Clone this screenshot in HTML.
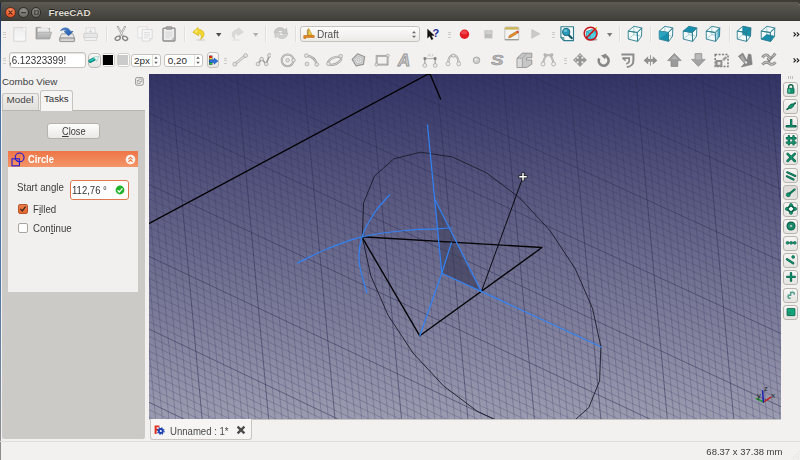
<!DOCTYPE html>
<html lang="en"><head><meta charset="utf-8"><title>FreeCAD</title>
<style>
html,body{margin:0;padding:0}
body{width:800px;height:460px;overflow:hidden;position:relative;background:#f2f1f0;font-family:"Liberation Sans","DejaVu Sans",sans-serif;font-size:10px;color:#3c3c3c}
.abs,.view,svg.ic{position:absolute}
.view{display:block}
#topband{left:0;top:0;width:800px;height:4px;background:#3e3c37}
#title{left:0;top:2.4px;width:800px;height:18.4px;background:linear-gradient(#5d5b53,#55534c 25%,#4a4943 60%,#41403b 92%,#36352f);border-radius:4px 4px 0 0;box-sizing:border-box}
#title .t{position:absolute;left:48.6px;top:4.2px;font-weight:bold;font-size:9.8px;color:#dfdbd2;letter-spacing:0;text-shadow:0 -1px 0 #222}
.wb{position:absolute;top:4.5px;width:10.8px;height:10.8px;border-radius:50%;box-sizing:border-box}
#leftedge{left:0;top:3px;width:1px;height:457px;background:linear-gradient(#1a2742,#2a4470 5%,#4a72a2 14%,#4f76a6 60%,#7a8797 85%,#8c8c8c 95%)}
.sep{position:absolute;width:1px;background:#e1dfdb;border-right:1px solid #f8f8f7}
.handle{position:absolute;width:3px;height:6px;background:repeating-linear-gradient(#cfccc7 0,#cfccc7 1px,transparent 1px,transparent 2.4px)}
/* left panel */
#combo-title{left:2px;top:76.3px;font-size:9.8px;color:#3c3c3c}
#pane{left:2px;top:110px;width:143px;height:329px;background:#cbcac7;border-top:1px solid #b9b6b1;box-sizing:border-box;border-radius:0 0 2px 2px}
.tab{position:absolute;box-sizing:border-box;border:1px solid #c6c3be;border-bottom:none;border-radius:3px 3px 0 0;font-size:10.3px;text-align:center}
#closebtn{left:47px;top:123px;width:53px;height:16px;border:1px solid #b6b3ad;border-radius:3px;box-sizing:border-box;background:linear-gradient(#fdfdfc,#ebe9e6);text-align:center;font-size:10px;line-height:16px;color:#3c3c3c}
#hdr{left:8px;top:151px;width:130px;height:16px;background:linear-gradient(#ee7546,#f39669);}
#hdr .t{position:absolute;left:20px;top:3px;font-weight:bold;color:#fff;font-size:10px;transform:scaleX(0.93);transform-origin:0 0}
#box{left:8px;top:167px;width:130px;height:125px;background:#f1f0ee}
#angle{left:70px;top:180px;width:59px;height:20px;border:1px solid #e0764a;border-radius:3px;box-sizing:border-box;background:#fff;font-size:10.2px;line-height:19px;padding-left:0.8px;color:#333}
.cb{position:absolute;width:10px;height:10px;box-sizing:border-box;border-radius:2px}
.lbl{position:absolute;font-size:10.3px;color:#3c3c3c;white-space:nowrap}
u{text-decoration:underline;text-underline-offset:1px}
/* right toolbar */
.rb{position:absolute;left:783px;width:15px;height:15px;box-sizing:border-box;border:1px solid #b9b6b0;border-radius:3px;background:linear-gradient(#f7f6f5,#e6e4e1)}
.rb svg{position:absolute;left:0;top:0}
/* bottom */
#doctab{left:149.5px;top:419px;width:102px;height:21.2px;box-sizing:border-box;border:1px solid #c9c6c1;border-top:none;border-radius:0 0 3px 3px;background:#f6f5f4}
#status{left:0;top:441px;width:800px;height:19px;border-top:1px solid #dfddd9;box-sizing:border-box}
/* toolbar widgets */
.field{position:absolute;box-sizing:border-box;border:1px solid #c6c3be;border-radius:3px;background:#fff}
.tbtn{position:absolute;box-sizing:border-box;border:1px solid #c6c3be;border-radius:3px;background:linear-gradient(#f9f8f7,#e8e6e3)}

</style></head>
<body>
<div id="topband" class="abs"></div>
<div id="title" class="abs">
  <div class="wb" style="left:5.3px;background:radial-gradient(circle at 50% 30%,#f7966b,#ea5a2e 65%,#d9481f);border:1px solid #5e2c18"><svg width="9" height="9" viewBox="0 0 9 9" style="position:absolute;left:0;top:0"><path d="M2.9 2.9l3.2 3.2M6.1 2.9l-3.2 3.2" stroke="#5a2410" stroke-width="1.1" stroke-linecap="round"/></svg></div>
  <div class="wb" style="left:17.9px;background:radial-gradient(circle at 50% 30%,#93918a,#74726b 65%,#66645e);border:1px solid #2e2d2a"><svg width="9" height="9" viewBox="0 0 9 9" style="position:absolute;left:0;top:0"><path d="M2.6 4.6h3.8" stroke="#3a3935" stroke-width="1.2" stroke-linecap="round"/></svg></div>
  <div class="wb" style="left:30.6px;background:radial-gradient(circle at 50% 30%,#93918a,#74726b 65%,#66645e);border:1px solid #2e2d2a"><svg width="9" height="9" viewBox="0 0 9 9" style="position:absolute;left:0;top:0"><rect x="2.7" y="2.8" width="3.6" height="3.4" fill="none" stroke="#3a3935" stroke-width="1"/></svg></div>
  <div class="t">FreeCAD</div>
</div>
<div id="leftedge" class="abs"></div>
<div class="handle" style="left:3.4px;top:32.4px"></div>
<div class="handle" style="left:448px;top:32.4px"></div>
<div class="handle" style="left:551.5px;top:32.4px"></div>
<div class="handle" style="left:3.4px;top:58.2px"></div>
<div class="handle" style="left:224px;top:58.2px"></div>
<div class="handle" style="left:563.5px;top:58.2px"></div>
<div class="sep" style="left:106px;top:26px;height:16px"></div>
<div class="sep" style="left:184px;top:26px;height:16px"></div>
<div class="sep" style="left:264.5px;top:26px;height:16px"></div>
<div class="sep" style="left:295px;top:26px;height:16px"></div>
<div class="sep" style="left:619px;top:26px;height:16px"></div>
<div class="sep" style="left:650px;top:26px;height:16px"></div>
<div class="sep" style="left:728.5px;top:26px;height:16px"></div>
<div class="tbtn" style="left:300px;top:26px;width:120px;height:15.5px;background:linear-gradient(#fcfcfb,#eceae7)"><span class="lbl" style="left:16px;top:1px;font-size:10.6px;color:#505050;transform:scaleX(0.95);transform-origin:0 0">Draft</span><svg width="6" height="9" viewBox="0 0 6 9" style="position:absolute;left:110.4px;top:3px"><path d="M1 3.2l2-2.2 2 2.2zM1 5.8l2 2.2 2-2.2z" fill="#6a6a6a"/></svg></div>
<div class="field" style="left:8.5px;top:52.3px;width:77.2px;height:15.8px;overflow:hidden;box-shadow:inset 0 1px 1px #e4e2de"><span class="lbl" style="left:-0.9px;top:1.5px;font-size:10.2px;color:#333;transform:scaleX(0.96);transform-origin:0 0">,6.12323399!</span></div>
<div class="tbtn" style="left:87.5px;top:52.5px;width:13.5px;height:15px;border-radius:4px;border-color:#c0bdb8"></div>
<div class="tbtn" style="left:102px;top:52.8px;width:12.8px;height:14.7px;background:#fdfdfd;border-color:#d2cfca"><div class="abs" style="left:0.2px;top:1.4px;width:10.3px;height:10px;background:#000"></div></div>
<div class="tbtn" style="left:116.5px;top:52.8px;width:13px;height:14.7px;background:#fdfdfd;border-color:#d2cfca"><div class="abs" style="left:0.5px;top:1.4px;width:10px;height:10.2px;background:#cbcbcb"></div></div>
<div class="field" style="left:131.2px;top:53.7px;width:29.6px;height:13px"><span class="lbl" style="left:1.8px;top:0.5px;font-size:9.9px;color:#2c2c2c">2px</span><div class="abs" style="left:19.6px;top:0;width:1px;height:11px;background:#e2dfdb"></div><svg width="6" height="10" viewBox="0 0 6 10" style="position:absolute;right:0.6px;top:0.6px"><path d="M1.2 3.8l1.8-2.2 1.8 2.2zM1.2 6.8l1.8 2.2 1.8-2.2z" fill="#666"/></svg></div>
<div class="field" style="left:164px;top:53.7px;width:38.8px;height:13px"><span class="lbl" style="left:2.8px;top:0.5px;font-size:9.9px;color:#2c2c2c">0,20</span><div class="abs" style="left:29.2px;top:0;width:1px;height:11px;background:#e2dfdb"></div><svg width="6" height="10" viewBox="0 0 6 10" style="position:absolute;right:0.6px;top:0.6px"><path d="M1.2 3.8l1.8-2.2 1.8 2.2zM1.2 6.8l1.8 2.2 1.8-2.2z" fill="#666"/></svg></div>
<div class="tbtn" style="left:206.5px;top:52.4px;width:12.6px;height:15.4px"></div>
<svg class="ic" width="14" height="15.4" viewBox="0 0 14 15.4" style="left:13px;top:26.6px"><defs><linearGradient id="nd" x1="0" y1="0" x2="0" y2="1"><stop offset="0" stop-color="#ededed"/><stop offset="1" stop-color="#fafafa"/></linearGradient></defs><path d="M0.8 0.6h12v13.6h-12z" fill="url(#nd)" stroke="#d2d2d2" stroke-width="0.9"/><path d="M9.6 0.8h3v3h-3z" fill="#fcfcfc" stroke="#dedede" stroke-width="0.6"/><path d="M0.8 14.8h12" stroke="#dcdcdc" stroke-width="0.9"/></svg>
<svg class="ic" width="17.4" height="14" viewBox="0 0 17.4 14" style="left:35px;top:26px"><defs><linearGradient id="fo" x1="0" y1="0" x2="0" y2="1"><stop offset="0" stop-color="#cacaca"/><stop offset="1" stop-color="#a9a9a9"/></linearGradient></defs><path d="M1 1.4h4.6l0.8 1h8.2v10.2h-13.6z" fill="#a2a2a2" stroke="#949494" stroke-width="0.6"/><path d="M2.6 2.2h11v6h-11z" fill="#f4f4f4"/><path d="M3.4 3.4h11v6h-11z" fill="#e9e9e9"/><path d="M2.8 6.2h13.8l-1.9 6.8h-13.7z" fill="url(#fo)" stroke="#9b9b9b" stroke-width="0.6" stroke-linejoin="round"/></svg>
<svg class="ic" width="17" height="16" viewBox="0 0 17 16" style="left:59px;top:26.6px"><defs><linearGradient id="sa" x1="0" y1="0" x2="1" y2="1"><stop offset="0" stop-color="#4a8ad6"/><stop offset="1" stop-color="#1f57a6"/></linearGradient></defs><path d="M2.6 6.8h11.2l1.8 4.4h-15z" fill="#e6e6e6" stroke="#909090" stroke-width="0.8" stroke-linejoin="round"/><rect x="0.6" y="11" width="15" height="3.6" rx="0.8" fill="#c2c2c2" stroke="#838383" stroke-width="0.8"/><path d="M2 12.2h12M2 13.5h12" stroke="#e6e6e6" stroke-width="0.6"/><path d="M1.6 3.6C3.4 0.2 9.6 -0.4 11.4 4.4h2.6l-4.4 4.4-4.4-4.2h2.5C6.6 2.6 3.8 2.4 1.6 3.6z" fill="url(#sa)" stroke="#1c4f98" stroke-width="0.6" stroke-linejoin="round"/></svg>
<svg class="ic" width="16" height="15" viewBox="0 0 16 15" style="left:83px;top:26.6px"><rect x="3" y="0.8" width="9" height="6" fill="#f4f4f4" stroke="#d4d4d4" stroke-width="0.8"/><path d="M7.5 2v3.2M6 3.8l1.5 1.6 1.5-1.6" fill="none" stroke="#d2d2d2" stroke-width="0.9"/><rect x="0.7" y="6.2" width="13.8" height="5" rx="1" fill="#e6e6e6" stroke="#cccccc" stroke-width="0.8"/><rect x="1.8" y="10.6" width="11.6" height="2.8" fill="#f0f0f0" stroke="#d2d2d2" stroke-width="0.8"/></svg>
<svg class="ic" width="15" height="16" viewBox="0 0 15 16" style="left:114px;top:26px"><path d="M3.8 0.8l5.2 9.4M11 0.8l-5.2 9.4" stroke="#9d9d9d" stroke-width="1.9" stroke-linecap="round"/><path d="M4 1.2l4.8 8.6M10.8 1.2l-4.8 8.6" stroke="#ededed" stroke-width="0.8" stroke-linecap="round"/><ellipse cx="3.7" cy="12.3" rx="2.6" ry="1.9" fill="none" stroke="#858585" stroke-width="1.4" transform="rotate(-25 3.7 12.3)"/><ellipse cx="11.1" cy="12.3" rx="2.6" ry="1.9" fill="none" stroke="#858585" stroke-width="1.4" transform="rotate(25 11.1 12.3)"/></svg>
<svg class="ic" width="16" height="16" viewBox="0 0 16 16" style="left:137px;top:26px"><path d="M0.7 0.8h9.6v11h-9.6z" fill="#f6f6f6" stroke="#dddddd" stroke-width="0.8"/><path d="M5.2 3.6h10v8.8l-2.6 2.6h-7.4z" fill="#f7f7f7" stroke="#d3d3d3" stroke-width="0.8"/><path d="M7 6.5h6M7 8.3h6M7 10.1h6M7 11.9h4" stroke="#d9d9d9" stroke-width="0.8"/><path d="M15.2 12.4h-2.6v2.6" fill="none" stroke="#d3d3d3" stroke-width="0.8"/></svg>
<svg class="ic" width="14" height="16" viewBox="0 0 14 16" style="left:162px;top:26px"><rect x="1" y="2.2" width="12" height="12.8" rx="0.8" fill="#ededed" stroke="#8a8a8a" stroke-width="1.3"/><rect x="4" y="0.7" width="6" height="2.6" rx="0.8" fill="#a8a8a8" stroke="#858585" stroke-width="0.7"/><path d="M3.6 6.2h6.8M3.6 8h6.8M3.6 9.8h6.8M3.6 11.6h4" stroke="#d2d2d2" stroke-width="0.8"/><path d="M12 11l-2.8 2.8h2.8z" fill="#b4b4b4"/></svg>
<svg class="ic" width="15" height="14" viewBox="0 0 15 14" style="left:192px;top:27px"><ellipse cx="8.6" cy="13" rx="4.6" ry="0.9" fill="#d9d9d2"/><path d="M6 0.6l-5.2 4.6 6 3.6-0.5-2.4c2.4-0.2 4 1.8 2.4 5.8 5-2.8 4.4-9.6-2.4-9.6z" fill="#f2d72e" stroke="#d6b818" stroke-width="0.8" stroke-linejoin="round"/><path d="M5.4 2.2l-2.8 2.6 2 1.2z" fill="#faed8e"/></svg>
<svg class="ic" width="6" height="4" viewBox="0 0 6 4" style="left:216px;top:33px"><path d="M0 0h5.4l-2.7 3.8z" fill="#4c4c4c"/></svg>
<svg class="ic" width="14" height="14" viewBox="0 0 14 14" style="left:230px;top:27px"><ellipse cx="6" cy="13" rx="4.5" ry="0.9" fill="#e6e6e6"/><path d="M8.4 0.8l4.8 4.2-5.6 3.4 0.4-2.2c-2.8-0.4-4.6 1.6-3 5.8-4.4-2.8-3.6-9.2 3-9.4z" fill="#dadada" stroke="#cfcfcf" stroke-width="0.8" stroke-linejoin="round"/></svg>
<svg class="ic" width="6" height="4" viewBox="0 0 6 4" style="left:252.5px;top:33px"><path d="M0 0h5.4l-2.7 3.8z" fill="#b0b0b0"/></svg>
<svg class="ic" width="16" height="15" viewBox="0 0 16 15" style="left:273px;top:26px"><g transform="scale(1.06 1.0)"><path d="M1.2 6.6c0.2-5 7-6.8 10-2.8l1.6-1.6 0.6 5.6-5.6-0.6 1.7-1.7c-1.8-2-5.2-1.2-5.6 1.7z" fill="#c9c9c9" stroke="#b8b8b8" stroke-width="0.7" stroke-linejoin="round"/><path d="M13.8 7.4c-0.2 5-7 6.8-10 2.8l-1.6 1.6-0.6-5.6 5.6 0.6-1.7 1.7c1.8 2 5.2 1.2 5.6-1.7z" fill="#d2d2d2" stroke="#bcbcbc" stroke-width="0.7" stroke-linejoin="round"/></g></svg>
<svg class="ic" width="12" height="11" viewBox="0 0 12 11" style="left:303px;top:28px"><path d="M5.6 0.4l3.6 6.8h-3.6z" fill="#f5d34a" stroke="#b98a12" stroke-width="0.7" stroke-linejoin="round"/><path d="M0.8 7.6h10.4v1.8h-8.6v1h-1.8z" fill="#e98a1c" stroke="#b45f0b" stroke-width="0.6" stroke-linejoin="round"/><path d="M4.4 1.4v6" stroke="#9b6b10" stroke-width="0.8"/></svg>
<svg class="ic" width="13" height="13" viewBox="0 0 13 13" style="left:427px;top:28px"><path d="M0.6 1.2v8.8l2.2-2 1.7 3.7 1.5-0.7-1.7-3.6h2.9z" fill="#111" stroke="#000" stroke-width="0.4"/><text x="5.4" y="9.4" font-family="Liberation Sans,sans-serif" font-weight="bold" font-size="11" fill="#1c2f9e">?</text></svg>
<svg class="ic" width="11" height="11" viewBox="0 0 11 11" style="left:459px;top:28.5px"><circle cx="5.5" cy="5.3" r="4.7" fill="#e31b23"/><ellipse cx="5.2" cy="3.4" rx="3" ry="1.9" fill="#f0565c" opacity="0.75"/></svg>
<svg class="ic" width="9" height="9" viewBox="0 0 9 9" style="left:484px;top:29.5px"><rect x="0.7" y="0.5" width="7.4" height="7.6" fill="#bcbcbc" stroke="#c9c9c9" stroke-width="0.7"/><rect x="1.4" y="1.2" width="6" height="2.8" fill="#d0d0d0"/></svg>
<svg class="ic" width="16" height="15" viewBox="0 0 16 15" style="left:504px;top:26px"><rect x="0.8" y="1" width="14" height="13" rx="1" fill="#f3f3f1" stroke="#bdbdb8" stroke-width="0.9"/><rect x="1.2" y="1.2" width="13.2" height="2.4" fill="#c9b458"/><path d="M0.8 13.6h14" stroke="#9c9c97" stroke-width="1.2"/><path d="M5.4 9.6l7-4.2 1.2 1.8-7 4.2-2 0.4z" fill="#e8952e" stroke="#a8601a" stroke-width="0.6" stroke-linejoin="round"/><path d="M12.4 5.4l1.4-0.8 1.2 1.8-1.4 0.8z" fill="#d83a3a"/></svg>
<svg class="ic" width="10" height="10" viewBox="0 0 10 10" style="left:531px;top:29px"><path d="M0.8 0.6l8 4.2-8 4.4z" fill="#cbcbcb" stroke="#bdbdbd" stroke-width="0.7" stroke-linejoin="round"/></svg>
<svg class="ic" width="15" height="16" viewBox="0 0 15 16" style="left:560px;top:26px"><path d="M0.9 0.8h12.6v13.8h-9.6l-3-3z" fill="#f4f8f9" stroke="#2c7d8e" stroke-width="1.1" stroke-linejoin="round"/><path d="M0.9 11.6h3v3" fill="none" stroke="#2c7d8e" stroke-width="0.9"/><path d="M8.2 8.4l3.6 3.8" stroke="#14586a" stroke-width="2.2" stroke-linecap="round"/><circle cx="6.2" cy="6" r="3.7" fill="#2a9ab8" stroke="#14647a" stroke-width="0.9"/><ellipse cx="5.4" cy="4.8" rx="1.8" ry="1.2" fill="#7fd0e2" opacity="0.8"/></svg>
<svg class="ic" width="16" height="16" viewBox="0 0 16 16" style="left:583px;top:26px"><ellipse cx="9" cy="13.6" rx="5.6" ry="1.2" fill="#555" opacity="0.45"/><path d="M3.4 5.4l6-1.8 3.6 2v6l-6 2-3.6-2z" fill="#55cfe0" stroke="#1d8fa6" stroke-width="0.7" stroke-linejoin="round"/><path d="M3.4 5.4l3.6 2.2 6-2M7 7.6v6" fill="none" stroke="#1d8fa6" stroke-width="0.6"/><path d="M9.4 6.4l4-4.8" stroke="#e8b62c" stroke-width="1.3" stroke-linecap="round"/><circle cx="7.6" cy="7.6" r="6.4" fill="none" stroke="#c4161c" stroke-width="1.5"/><path d="M3 12.2l9.2-9.2" stroke="#c4161c" stroke-width="1.6"/></svg>
<svg class="ic" width="6" height="4" viewBox="0 0 6 4" style="left:607px;top:33px"><path d="M0 0h5.4l-2.7 3.8z" fill="#7c7c7c"/></svg>
<svg class="ic" width="16" height="18" viewBox="0 0 16 18" style="left:627px;top:25px"><polygon points="1.2,6.1 6.8,1.3 14.8,2.9 14.5,11.3 10.6,16.4 1.3,14.1" fill="#f3fafb"/><path d="M6.8 9.6L1.3 14.1M6.8 9.6L14.5 11.3M6.8 9.6L6.8 1.3" stroke="#7fb4bf" stroke-width="0.6" fill="none"/><polygon points="1.2,6.1 10.3,7.5 10.6,16.4 1.3,14.1" fill="none" stroke="#2c7e90" stroke-width="0.9" stroke-linejoin="round"/><polygon points="1.2,6.1 6.8,1.3 14.8,2.9 10.3,7.5" fill="none" stroke="#2c7e90" stroke-width="0.9" stroke-linejoin="round"/><polygon points="10.3,7.5 14.8,2.9 14.5,11.3 10.6,16.4" fill="none" stroke="#2c7e90" stroke-width="0.9" stroke-linejoin="round"/></svg>
<svg class="ic" width="16" height="18" viewBox="0 0 16 18" style="left:658.1px;top:25px"><polygon points="1.2,6.1 6.8,1.3 14.8,2.9 14.5,11.3 10.6,16.4 1.3,14.1" fill="#f3fafb"/><path d="M6.8 9.6L1.3 14.1M6.8 9.6L14.5 11.3M6.8 9.6L6.8 1.3" stroke="#7fb4bf" stroke-width="0.6" fill="none"/><polygon points="1.2,6.1 10.3,7.5 10.6,16.4 1.3,14.1" fill="#168fae" stroke="#2c7e90" stroke-width="0.9" stroke-linejoin="round"/><polygon points="1.2,6.1 6.8,1.3 14.8,2.9 10.3,7.5" fill="none" stroke="#2c7e90" stroke-width="0.9" stroke-linejoin="round"/><polygon points="10.3,7.5 14.8,2.9 14.5,11.3 10.6,16.4" fill="none" stroke="#2c7e90" stroke-width="0.9" stroke-linejoin="round"/><polygon points="1.2,6.1 10.3,7.5 1.3,14.1" fill="#3fb4d0" opacity="0.55"/></svg>
<svg class="ic" width="16" height="18" viewBox="0 0 16 18" style="left:681.5px;top:25px"><polygon points="1.2,6.1 6.8,1.3 14.8,2.9 14.5,11.3 10.6,16.4 1.3,14.1" fill="#f3fafb"/><path d="M6.8 9.6L1.3 14.1M6.8 9.6L14.5 11.3M6.8 9.6L6.8 1.3" stroke="#7fb4bf" stroke-width="0.6" fill="none"/><polygon points="1.2,6.1 10.3,7.5 10.6,16.4 1.3,14.1" fill="none" stroke="#2c7e90" stroke-width="0.9" stroke-linejoin="round"/><polygon points="1.2,6.1 6.8,1.3 14.8,2.9 10.3,7.5" fill="#168fae" stroke="#2c7e90" stroke-width="0.9" stroke-linejoin="round"/><polygon points="10.3,7.5 14.8,2.9 14.5,11.3 10.6,16.4" fill="none" stroke="#2c7e90" stroke-width="0.9" stroke-linejoin="round"/></svg>
<svg class="ic" width="16" height="18" viewBox="0 0 16 18" style="left:705.4px;top:25px"><defs><linearGradient id="cg" x1="0" y1="0" x2="1" y2="0"><stop offset="0" stop-color="#e4f4f7"/><stop offset="1" stop-color="#1a93b2"/></linearGradient></defs><polygon points="1.2,6.1 6.8,1.3 14.8,2.9 14.5,11.3 10.6,16.4 1.3,14.1" fill="#f3fafb"/><path d="M6.8 9.6L1.3 14.1M6.8 9.6L14.5 11.3M6.8 9.6L6.8 1.3" stroke="#7fb4bf" stroke-width="0.6" fill="none"/><polygon points="1.2,6.1 10.3,7.5 10.6,16.4 1.3,14.1" fill="none" stroke="#2c7e90" stroke-width="0.9" stroke-linejoin="round"/><polygon points="1.2,6.1 6.8,1.3 14.8,2.9 10.3,7.5" fill="none" stroke="#2c7e90" stroke-width="0.9" stroke-linejoin="round"/><polygon points="10.3,7.5 14.8,2.9 14.5,11.3 10.6,16.4" fill="url(#cg)" stroke="#2c7e90" stroke-width="0.9" stroke-linejoin="round"/></svg>
<svg class="ic" width="16" height="18" viewBox="0 0 16 18" style="left:736.4px;top:25px"><polygon points="1.2,6.1 6.8,1.3 14.8,2.9 14.5,11.3 10.6,16.4 1.3,14.1" fill="#f3fafb"/><path d="M6.8 9.6L1.3 14.1M6.8 9.6L14.5 11.3M6.8 9.6L6.8 1.3" stroke="#7fb4bf" stroke-width="0.6" fill="none"/><polygon points="6.8,1.3 14.8,2.9 14.5,11.3 6.8,9.6" fill="#1790ae" stroke="#0f6e86" stroke-width="0.5"/><polygon points="1.2,6.1 10.3,7.5 10.6,16.4 1.3,14.1" fill="none" stroke="#2c7e90" stroke-width="0.9" stroke-linejoin="round"/><polygon points="1.2,6.1 6.8,1.3 14.8,2.9 10.3,7.5" fill="none" stroke="#2c7e90" stroke-width="0.9" stroke-linejoin="round"/><polygon points="10.3,7.5 14.8,2.9 14.5,11.3 10.6,16.4" fill="none" stroke="#2c7e90" stroke-width="0.9" stroke-linejoin="round"/></svg>
<svg class="ic" width="16" height="18" viewBox="0 0 16 18" style="left:759.8px;top:25px"><polygon points="1.2,6.1 6.8,1.3 14.8,2.9 14.5,11.3 10.6,16.4 1.3,14.1" fill="#f3fafb"/><path d="M6.8 9.6L1.3 14.1M6.8 9.6L14.5 11.3M6.8 9.6L6.8 1.3" stroke="#7fb4bf" stroke-width="0.6" fill="none"/><polygon points="1.3,14.1 10.6,16.4 14.5,11.3 6.8,9.6" fill="#1790ae" stroke="#0f6e86" stroke-width="0.5"/><polygon points="1.2,6.1 10.3,7.5 10.6,16.4 1.3,14.1" fill="none" stroke="#2c7e90" stroke-width="0.9" stroke-linejoin="round"/><polygon points="1.2,6.1 6.8,1.3 14.8,2.9 10.3,7.5" fill="none" stroke="#2c7e90" stroke-width="0.9" stroke-linejoin="round"/><polygon points="10.3,7.5 14.8,2.9 14.5,11.3 10.6,16.4" fill="none" stroke="#2c7e90" stroke-width="0.9" stroke-linejoin="round"/></svg>
<svg class="ic" width="7" height="5" viewBox="0 0 7 5" style="left:793px;top:32.2px"><path d="M0.6 0.4l2 2-2 2M3.8 0.4l2 2-2 2" fill="none" stroke="#222" stroke-width="1.2"/></svg>
<svg class="ic" width="7" height="5" viewBox="0 0 7 5" style="left:793px;top:58.3px"><path d="M0.6 0.4l2 2-2 2M3.8 0.4l2 2-2 2" fill="none" stroke="#222" stroke-width="1.2"/></svg>
<svg class="ic" width="13" height="14" viewBox="0 0 13 14" style="left:88px;top:53px"><path d="M2.2 8.2l3.8-2" stroke="#0b857c" stroke-width="3.6" stroke-linecap="round"/><path d="M2.3 7.8l3.6-1.9" stroke="#2acdbd" stroke-width="1.6" stroke-linecap="round"/><path d="M5.6 4.2l5.4-1-2.6 5.4-1-2.4z" fill="#e4f8f3" stroke="#8fc4bb" stroke-width="0.6" stroke-linejoin="round"/></svg>
<svg class="ic" width="11" height="11" viewBox="0 0 11 11" style="left:208px;top:55px"><rect x="1" y="0.6" width="3.4" height="9.2" fill="#444"/><rect x="1.4" y="0.9" width="2.6" height="2" fill="#e3191c"/><rect x="1.4" y="2.9" width="2.6" height="1.9" fill="#f1e21c"/><rect x="1.4" y="7.3" width="2.6" height="2.1" fill="#1fc42a"/><path d="M1.4 4.7h4.6v-1.7l4 3.1-4 3.1v-1.7h-4.6z" fill="#2c6fd6" stroke="#1b4fa8" stroke-width="0.5" stroke-linejoin="round"/></svg>
<svg class="ic" width="16" height="14" viewBox="0 0 16 14" style="left:232px;top:53px"><path d="M3 11L13.6 2.6" stroke="#acacac" stroke-width="2.6" stroke-linecap="round"/><path d="M3 11L13.6 2.6" stroke="#e0e0e0" stroke-width="1.4000000000000001" stroke-linecap="round"/><circle cx="2.8" cy="11.2" r="2" fill="#e2e2e2" stroke="#a0a0a0" stroke-width="0.7"/><circle cx="13.6" cy="2.6" r="1.9" fill="#e2e2e2" stroke="#a0a0a0" stroke-width="0.7"/></svg>
<svg class="ic" width="16" height="14" viewBox="0 0 16 14" style="left:255px;top:53px"><path d="M3 11l3.6-5 4.6 5 3.2-8.6" fill="none" stroke="#9a9a9a" stroke-width="1.6" stroke-linejoin="round"/><circle cx="3" cy="11" r="1.9" fill="#e2e2e2" stroke="#a0a0a0" stroke-width="0.7"/><circle cx="6.6" cy="6" r="1.8" fill="#e2e2e2" stroke="#a0a0a0" stroke-width="0.7"/><circle cx="11.2" cy="11" r="1.8" fill="#e2e2e2" stroke="#a0a0a0" stroke-width="0.7"/><circle cx="14.4" cy="2.4" r="1.9" fill="#e2e2e2" stroke="#a0a0a0" stroke-width="0.7"/></svg>
<svg class="ic" width="16" height="15" viewBox="0 0 16 15" style="left:280px;top:53px"><circle cx="7.6" cy="7.3" r="5.9" fill="none" stroke="#9c9c9c" stroke-width="2"/><circle cx="7.6" cy="7.3" r="5.9" fill="none" stroke="#dcdcdc" stroke-width="0.8"/><circle cx="7.6" cy="7.3" r="1.8" fill="#e2e2e2" stroke="#a0a0a0" stroke-width="0.7"/><circle cx="13.5" cy="7.2" r="1.8" fill="#e2e2e2" stroke="#a0a0a0" stroke-width="0.7"/></svg>
<svg class="ic" width="16" height="14" viewBox="0 0 16 14" style="left:304px;top:53px"><path d="M2.4 2.6c6 0.6 9.4 4 10.4 9" fill="none" stroke="#9a9a9a" stroke-width="2.4" stroke-linecap="round"/><path d="M2.4 2.6c6 0.6 9.4 4 10.4 9" fill="none" stroke="#d9d9d9" stroke-width="1" stroke-linecap="round"/><circle cx="2.4" cy="2.6" r="1.9" fill="#e2e2e2" stroke="#a0a0a0" stroke-width="0.7"/><circle cx="12.8" cy="11.4" r="1.9" fill="#e2e2e2" stroke="#a0a0a0" stroke-width="0.7"/><circle cx="3" cy="11" r="1.9" fill="#e2e2e2" stroke="#a0a0a0" stroke-width="0.7"/></svg>
<svg class="ic" width="18" height="15" viewBox="0 0 18 15" style="left:326px;top:53px"><ellipse cx="8.6" cy="7.8" rx="7" ry="3.3" transform="rotate(-22 8.6 7.8)" fill="none" stroke="#9c9c9c" stroke-width="2.2"/><ellipse cx="8.6" cy="7.8" rx="7" ry="3.3" transform="rotate(-22 8.6 7.8)" fill="none" stroke="#dadada" stroke-width="0.9"/><circle cx="2.4" cy="10.8" r="1.8" fill="#e2e2e2" stroke="#a0a0a0" stroke-width="0.7"/><circle cx="14.8" cy="3.2" r="1.8" fill="#e2e2e2" stroke="#a0a0a0" stroke-width="0.7"/></svg>
<svg class="ic" width="16" height="15" viewBox="0 0 16 15" style="left:351px;top:53px"><path d="M6.6 0.8l7 3-1.2 7.6-7.4 1.4-3.8-6.4z" fill="#d3d3d3" stroke="#959595" stroke-width="1.2" stroke-linejoin="round"/><path d="M7 3.2l4.2 1.8-0.8 4.6-4.4 0.8-2.2-3.8z" fill="#f0f0f0" stroke="#adadad" stroke-width="0.7"/><circle cx="7.6" cy="6.6" r="1.7" fill="#e2e2e2" stroke="#a0a0a0" stroke-width="0.7"/></svg>
<svg class="ic" width="16" height="14" viewBox="0 0 16 14" style="left:374px;top:53px"><rect x="2.6" y="2.8" width="11" height="8.8" fill="none" stroke="#8f8f8f" stroke-width="1.7"/><rect x="2.6" y="2.8" width="11" height="8.8" fill="none" stroke="#cfcfcf" stroke-width="0.5"/><circle cx="2.4" cy="11.6" r="1.5" fill="#e2e2e2" stroke="#a0a0a0" stroke-width="0.7"/><circle cx="13.8" cy="2.6" r="1.5" fill="#e2e2e2" stroke="#a0a0a0" stroke-width="0.7"/></svg>
<svg class="ic" width="18" height="17" viewBox="0 0 18 17" style="left:397px;top:51px"><text x="0.6" y="14.6" font-family="Liberation Sans,sans-serif" font-style="italic" font-weight="bold" font-size="16" fill="#cdcdcd" stroke="#939393" stroke-width="0.8" transform="scale(1.08 1)">A</text></svg>
<svg class="ic" width="16" height="15" viewBox="0 0 16 15" style="left:422px;top:53px"><path d="M2.8 5.6h10.4" stroke="#b4b4b4" stroke-width="1"/><path d="M2.8 5.6v6.6M13.2 5.6v6.6" stroke="#a6a6a6" stroke-width="1.3"/><path d="M6 3.6l1-2.4M8 3.4v-2.6M10 3.6l1-2.4" stroke="#b5b5b5" stroke-width="0.6"/><rect x="1.6" y="4.2" width="2.6" height="2.6" fill="#7d7d7d"/><rect x="11.8" y="4.2" width="2.6" height="2.6" fill="#7d7d7d"/><circle cx="2.8" cy="12.4" r="1.9" fill="#ececec" stroke="#a0a0a0" stroke-width="0.7"/><circle cx="13.2" cy="12.4" r="1.9" fill="#ececec" stroke="#a0a0a0" stroke-width="0.7"/></svg>
<svg class="ic" width="16" height="14" viewBox="0 0 16 14" style="left:445px;top:53px"><path d="M3 10.4c0.4-11 10.2-11 10.8 0" fill="none" stroke="#a4a4a4" stroke-width="2.2"/><path d="M3 10.4c0.4-11 10.2-11 10.8 0" fill="none" stroke="#dedede" stroke-width="0.9"/><circle cx="3" cy="10.8" r="2" fill="#ececec" stroke="#a0a0a0" stroke-width="0.7"/><circle cx="13.8" cy="10.8" r="2" fill="#ececec" stroke="#a0a0a0" stroke-width="0.7"/><circle cx="8.4" cy="2.6" r="1.7" fill="#e4e4e4" stroke="#a0a0a0" stroke-width="0.7"/></svg>
<svg class="ic" width="9" height="9" viewBox="0 0 9 9" style="left:472px;top:56px"><circle cx="4.5" cy="4.3" r="3.3" fill="#cfcfcf" stroke="#a3a3a3" stroke-width="0.9"/><circle cx="3.8" cy="3.5" r="1.3" fill="#e8e8e8"/></svg>
<svg class="ic" width="18" height="17" viewBox="0 0 18 17" style="left:491px;top:51px"><text x="0" y="14.2" font-family="Liberation Sans,sans-serif" font-style="italic" font-weight="bold" font-size="14.5" fill="#b9b9b9" stroke="#909090" stroke-width="0.6" transform="scale(1.28 1)">S</text></svg>
<svg class="ic" width="17" height="16" viewBox="0 0 17 16" style="left:516px;top:52px"><path d="M1 6.2l5.4-5h9.4v4.6h-5.2v2.2h5.2v4.2l-5.4 3.4h-9.4z" fill="#c6c6c6" stroke="#8f8f8f" stroke-width="0.9" stroke-linejoin="round"/><path d="M1 6.2h5.4v9.4M6.4 6.2l4.2-4.6" fill="none" stroke="#9a9a9a" stroke-width="0.8"/><path d="M1.6 6.8h4.2v8.2h-4.2z" fill="#d9d9d9"/></svg>
<svg class="ic" width="16" height="14" viewBox="0 0 16 14" style="left:540px;top:53px"><path d="M3 11c2-12 8.6-12 10.6 0" fill="none" stroke="#a2a2a2" stroke-width="1.9"/><path d="M3 11c2-12 8.6-12 10.6 0" fill="none" stroke="#dcdcdc" stroke-width="0.7"/><path d="M5 1.6l-2 9.4M11.8 1.6l1.8 9.4" stroke="#c0c0c0" stroke-width="0.7"/><circle cx="3" cy="11" r="2" fill="#f0f0f0" stroke="#a0a0a0" stroke-width="0.7"/><circle cx="13.6" cy="11" r="2" fill="#f0f0f0" stroke="#a0a0a0" stroke-width="0.7"/><circle cx="5" cy="1.8" r="1.2" fill="#c4c4c4" stroke="#a5a5a5" stroke-width="0.7"/><circle cx="11.8" cy="1.8" r="1.2" fill="#c4c4c4" stroke="#a5a5a5" stroke-width="0.7"/></svg>
<svg class="ic" width="14" height="14" viewBox="0 0 14 14" style="left:573px;top:53px"><path d="M7 0.4l2.8 3h-1.7v2.5h2.5v-1.7l3 2.8-3 2.8v-1.7h-2.5v2.5h1.7l-2.8 3-2.8-3h1.7v-2.5h-2.5v1.7l-3-2.8 3-2.8v1.7h2.5v-2.5h-1.7z" fill="#989898" stroke="#848484" stroke-width="0.5" stroke-linejoin="round"/><path d="M7 1.6l1.2 1.4h-2.4zM1.6 7l1.4-1.2v2.4z" fill="#c9c9c9"/></svg>
<svg class="ic" width="15" height="15" viewBox="0 0 15 15" style="left:596px;top:53px"><path d="M3.2 5.4a5 5 0 1 0 5.6-2.6" fill="none" stroke="#888" stroke-width="2.6"/><path d="M10.4 0.6l-5.4 1.8 4 3.8z" fill="#888"/></svg>
<svg class="ic" width="15" height="15" viewBox="0 0 15 15" style="left:620px;top:53px"><path d="M1.4 1.4h12v6c0 4-3 6.4-6.6 6.6" fill="none" stroke="#8c8c8c" stroke-width="2"/><path d="M2.6 5.2h6.6v2.4c0 1.8-1.4 3-3 3.2" fill="none" stroke="#8c8c8c" stroke-width="1.7"/><path d="M2.4 5.2l3.4 2.4" stroke="#8c8c8c" stroke-width="1.5"/></svg>
<svg class="ic" width="16" height="11" viewBox="0 0 16 11" style="left:643px;top:55px"><path d="M0.6 5.4l4.6-4.2v2.8h4.6v-2.8l4.6 4.2-4.6 4.2v-2.8h-4.6v2.8z" fill="#8e8e8e"/><path d="M7.5 0.6v9.6" stroke="#f2f1f0" stroke-width="1"/><path d="M7.5 0.2v10.4" stroke="#8e8e8e" stroke-width="0.9" transform="translate(0 0)"/></svg>
<svg class="ic" width="15" height="14" viewBox="0 0 15 14" style="left:667px;top:53px"><path d="M7.4 0.6l6.8 7h-3.4v5.8h-6.8v-5.8h-3.4z" fill="#9a9a9a" stroke="#858585" stroke-width="0.7" stroke-linejoin="round"/><path d="M7.4 2.4l3.4 3.8h-6.8z" fill="#b4b4b4"/></svg>
<svg class="ic" width="15" height="14" viewBox="0 0 15 14" style="left:691px;top:53px"><path d="M7.4 13.4l6.8-7h-3.4v-5.8h-6.8v5.8h-3.4z" fill="#a3a3a3" stroke="#8e8e8e" stroke-width="0.7" stroke-linejoin="round"/><path d="M4.6 1.2h5.6v5.2h-5.6z" fill="#b9b9b9"/></svg>
<svg class="ic" width="16" height="15" viewBox="0 0 16 15" style="left:714px;top:53px"><rect x="1.2" y="1.6" width="12.8" height="12" fill="none" stroke="#7c7c7c" stroke-width="1.5" stroke-dasharray="2 1.4"/><rect x="1.4" y="7" width="7" height="6.8" fill="#8f8f8f"/><rect x="3.6" y="9" width="2.8" height="2.8" fill="#e6e6e6"/><path d="M8.2 6.2l3.4-3 1.6 1.6-3.2 3.2z" fill="#9a9a9a"/></svg>
<svg class="ic" width="16" height="16" viewBox="0 0 16 16" style="left:737px;top:52px"><path d="M1.4 4.2l4.4-3.2 4.2 7.6 1.4-6.6 2.6 0.6 1.2 9.8-11 2.6 3.2-3.6z" fill="#858585" stroke="#777" stroke-width="0.5" stroke-linejoin="round"/><path d="M3 4.6l2.4-1.6 3.4 6.2-2.2 1.6z" fill="#a9a9a9"/><circle cx="9" cy="10.4" r="1.2" fill="#e8e8e8"/></svg>
<svg class="ic" width="16" height="16" viewBox="0 0 16 16" style="left:761px;top:52px"><path d="M1.4 5.6c2.4-3.4 4.6-3.4 6.6-0.8 1.6 2 3.6 0.6 6.4-3.4" fill="none" stroke="#8c8c8c" stroke-width="2.8"/><path d="M1.4 5.6c2.4-3.4 4.6-3.4 6.6-0.8 1.6 2 3.6 0.6 6.4-3.4" fill="none" stroke="#dedede" stroke-width="0.8"/><path d="M1.2 12.6c3-3.2 5-2.8 7-1.2 2 1.6 4 1.2 6.4-1.2" fill="none" stroke="#8c8c8c" stroke-width="2.8"/><path d="M1.2 12.6c3-3.2 5-2.8 7-1.2 2 1.6 4 1.2 6.4-1.2" fill="none" stroke="#dedede" stroke-width="0.8"/><path d="M6 6.4l2.4 2.8 3-4" fill="none" stroke="#777" stroke-width="1.2"/></svg>
<!-- left panel -->
<div id="combo-title" class="abs">Combo View</div>
<svg class="ic" width="9" height="9" viewBox="0 0 9 9" style="left:135.4px;top:77.4px"><rect x="0.6" y="0.6" width="7.6" height="7.6" rx="1.4" fill="#f6f5f4" stroke="#8d8a85" stroke-width="0.9"/><rect x="2.2" y="3.6" width="3" height="3" fill="none" stroke="#9a9792" stroke-width="0.7"/><rect x="4" y="2" width="2.8" height="2.8" fill="#f6f5f4" stroke="#9a9792" stroke-width="0.7"/></svg>
<div class="tab" style="left:1.5px;top:93px;width:37px;height:17px;background:linear-gradient(#efeeec,#e2e0dd);line-height:12.6px;color:#444;font-size:9.9px">Model</div>
<div id="pane" class="abs"></div>
<div class="tab" style="left:40px;top:90.3px;width:32.6px;height:20.7px;background:#f6f5f4;line-height:16.6px;color:#333;font-size:9.7px">Tasks</div>
<div id="closebtn" class="abs"><span style="display:inline-block;transform:scaleX(0.92)"><u>C</u>lose</span></div>
<div id="hdr" class="abs"><svg width="15" height="15" viewBox="0 0 15 15" style="position:absolute;left:2.6px;top:1px"><circle cx="8.6" cy="5.4" r="4.4" fill="none" stroke="#2419d8" stroke-width="1.1"/><rect x="1" y="6.8" width="7.4" height="7" fill="none" stroke="#2419d8" stroke-width="1.1"/></svg><div class="t">Circle</div><svg width="11" height="11" viewBox="0 0 11 11" style="position:absolute;left:117px;top:3px"><circle cx="5.5" cy="5.5" r="4.8" fill="#fdf3ee"/><path d="M3.4 5.2l2.1-2 2.1 2M3.4 7.8l2.1-2 2.1 2" fill="none" stroke="#e8743f" stroke-width="1.1"/></svg></div>
<div id="box" class="abs"></div>
<div class="lbl" style="left:16.5px;top:181.6px;font-size:10px;transform:scaleX(0.97);transform-origin:0 0">Start angle</div>
<div id="angle" class="abs"><span style="display:inline-block;transform:scaleX(0.935);transform-origin:0 0">112,76 °</span><svg width="10" height="10" viewBox="0 0 10 10" style="position:absolute;left:44px;top:4.4px"><circle cx="5" cy="5" r="4.4" fill="#1fb32a"/><path d="M2.6 5.2l1.7 1.8 3.2-3.6" fill="none" stroke="#fff" stroke-width="1.3"/></svg></div>
<div class="cb" style="left:18px;top:204px;background:linear-gradient(#ee7d4c,#e4672f);border:1px solid #b9562b"><svg width="8" height="8" viewBox="0 0 8 8" style="position:absolute;left:0;top:0"><path d="M1.4 3.8l1.9 2.2 3.2-4.4" fill="none" stroke="#3a2a22" stroke-width="1.3"/></svg></div>
<div class="lbl" style="left:33px;top:203.6px;font-size:10.1px;transform:scaleX(0.96);transform-origin:0 0">F<u>i</u>lled</div>
<div class="cb" style="left:18px;top:222.5px;background:#fff;border:1px solid #a9a6a0"></div>
<div class="lbl" style="left:33px;top:222.6px;font-size:10.1px;transform:scaleX(0.955);transform-origin:0 0">Con<u>t</u>inue</div>

<svg class="view" width="632" height="345" viewBox="0 0 632 345" style="left:149px;top:74px">
<defs><filter id="gb" x="0" y="0" width="1" height="1"><feGaussianBlur stdDeviation="0.45"/></filter><linearGradient id="bg" x1="0" y1="0" x2="0" y2="1"><stop offset="0" stop-color="#333365"/><stop offset="1" stop-color="#9b9bb0"/></linearGradient></defs>
<rect width="632" height="345" fill="url(#bg)"/>
<g transform="translate(-149 -74)" fill="none">
<g transform="translate(149 74)" filter="url(#gb)">
<path d="M-2.0 323.4L0.2 347.0 M-2.0 251.2L6.8 347.0 M-2.0 178.9L13.5 347.0 M-2.0 106.7L20.1 347.0 M-2.0 34.5L26.8 347.0 M1.3 -2.0L33.4 347.0 M7.9 -2.0L40.0 347.0 M14.6 -2.0L46.7 347.0 M27.9 -2.0L60.0 347.0 M34.5 -2.0L66.6 347.0 M41.2 -2.0L73.3 347.0 M47.8 -2.0L79.9 347.0 M54.4 -2.0L86.6 347.0 M61.1 -2.0L93.2 347.0 M67.7 -2.0L99.8 347.0 M74.4 -2.0L106.5 347.0 M81.0 -2.0L113.1 347.0 M94.3 -2.0L126.4 347.0 M101.0 -2.0L133.1 347.0 M107.6 -2.0L139.7 347.0 M114.3 -2.0L146.4 347.0 M120.9 -2.0L153.0 347.0 M127.5 -2.0L159.7 347.0 M134.2 -2.0L166.3 347.0 M140.8 -2.0L172.9 347.0 M147.5 -2.0L179.6 347.0 M160.8 -2.0L192.9 347.0 M167.4 -2.0L199.5 347.0 M174.1 -2.0L206.2 347.0 M180.7 -2.0L212.8 347.0 M187.3 -2.0L219.5 347.0 M194.0 -2.0L226.1 347.0 M200.6 -2.0L232.7 347.0 M207.3 -2.0L239.4 347.0 M213.9 -2.0L246.0 347.0 M227.2 -2.0L259.3 347.0 M233.9 -2.0L266.0 347.0 M240.5 -2.0L272.6 347.0 M247.2 -2.0L279.3 347.0 M253.8 -2.0L285.9 347.0 M260.4 -2.0L292.6 347.0 M267.1 -2.0L299.2 347.0 M273.7 -2.0L305.8 347.0 M280.4 -2.0L312.5 347.0 M293.7 -2.0L325.8 347.0 M300.3 -2.0L332.4 347.0 M307.0 -2.0L339.1 347.0 M313.6 -2.0L345.7 347.0 M320.2 -2.0L352.4 347.0 M326.9 -2.0L359.0 347.0 M333.5 -2.0L365.6 347.0 M340.2 -2.0L372.3 347.0 M346.8 -2.0L378.9 347.0 M360.1 -2.0L392.2 347.0 M366.8 -2.0L398.9 347.0 M373.4 -2.0L405.5 347.0 M380.1 -2.0L412.2 347.0 M386.7 -2.0L418.8 347.0 M393.3 -2.0L425.5 347.0 M400.0 -2.0L432.1 347.0 M406.6 -2.0L438.7 347.0 M413.3 -2.0L445.4 347.0 M426.6 -2.0L458.7 347.0 M433.2 -2.0L465.3 347.0 M439.9 -2.0L472.0 347.0 M446.5 -2.0L478.6 347.0 M453.1 -2.0L485.3 347.0 M459.8 -2.0L491.9 347.0 M466.4 -2.0L498.5 347.0 M473.1 -2.0L505.2 347.0 M479.7 -2.0L511.8 347.0 M493.0 -2.0L525.1 347.0 M499.7 -2.0L531.8 347.0 M506.3 -2.0L538.4 347.0 M513.0 -2.0L545.1 347.0 M519.6 -2.0L551.7 347.0 M526.2 -2.0L558.4 347.0 M532.9 -2.0L565.0 347.0 M539.5 -2.0L571.6 347.0 M546.2 -2.0L578.3 347.0 M559.5 -2.0L591.6 347.0 M566.1 -2.0L598.2 347.0 M572.8 -2.0L604.9 347.0 M579.4 -2.0L611.5 347.0 M586.0 -2.0L618.2 347.0 M592.7 -2.0L624.8 347.0 M599.3 -2.0L631.4 347.0 M606.0 -2.0L634.0 302.5 M612.6 -2.0L634.0 230.3 M625.9 -2.0L634.0 85.8 M632.6 -2.0L634.0 13.6 M623.5 -2.0L634.0 2.7 M607.8 -2.0L634.0 9.7 M592.0 -2.0L634.0 16.8 M576.3 -2.0L634.0 23.8 M560.6 -2.0L634.0 30.9 M544.8 -2.0L634.0 38.0 M513.5 -2.0L634.0 52.1 M497.8 -2.0L634.0 59.2 M482.1 -2.0L634.0 66.3 M466.5 -2.0L634.0 73.4 M450.8 -2.0L634.0 80.6 M435.2 -2.0L634.0 87.7 M419.6 -2.0L634.0 94.8 M404.0 -2.0L634.0 101.9 M388.4 -2.0L634.0 109.1 M357.3 -2.0L634.0 123.4 M341.7 -2.0L634.0 130.5 M326.2 -2.0L634.0 137.7 M310.7 -2.0L634.0 144.8 M295.2 -2.0L634.0 152.0 M279.7 -2.0L634.0 159.2 M264.2 -2.0L634.0 166.4 M248.7 -2.0L634.0 173.6 M233.2 -2.0L634.0 180.8 M202.3 -2.0L634.0 195.2 M186.9 -2.0L634.0 202.4 M171.5 -2.0L634.0 209.7 M156.1 -2.0L634.0 216.9 M140.7 -2.0L634.0 224.2 M125.3 -2.0L634.0 231.4 M110.0 -2.0L634.0 238.7 M94.6 -2.0L634.0 245.9 M79.3 -2.0L634.0 253.2 M48.6 -2.0L634.0 267.8 M33.3 -2.0L634.0 275.0 M18.0 -2.0L634.0 282.3 M2.8 -2.0L634.0 289.6 M-2.0 2.9L634.0 297.0 M-2.0 9.9L634.0 304.3 M-2.0 17.0L634.0 311.6 M-2.0 24.1L634.0 318.9 M-2.0 31.2L634.0 326.3 M-2.0 45.3L634.0 341.0 M-2.0 52.4L631.2 347.0 M-2.0 59.6L615.4 347.0 M-2.0 66.7L599.6 347.0 M-2.0 73.8L583.8 347.0 M-2.0 80.9L568.0 347.0 M-2.0 88.1L552.2 347.0 M-2.0 95.2L536.5 347.0 M-2.0 102.4L520.7 347.0 M-2.0 116.7L489.3 347.0 M-2.0 123.8L473.6 347.0 M-2.0 131.0L457.9 347.0 M-2.0 138.2L442.2 347.0 M-2.0 145.4L426.6 347.0 M-2.0 152.6L410.9 347.0 M-2.0 159.8L395.3 347.0 M-2.0 167.0L379.6 347.0 M-2.0 174.2L364.0 347.0 M-2.0 188.7L332.8 347.0 M-2.0 195.9L317.3 347.0 M-2.0 203.2L301.7 347.0 M-2.0 210.4L286.1 347.0 M-2.0 217.7L270.6 347.0 M-2.0 224.9L255.1 347.0 M-2.0 232.2L239.5 347.0 M-2.0 239.5L224.0 347.0 M-2.0 246.8L208.5 347.0 M-2.0 261.4L177.6 347.0 M-2.0 268.7L162.1 347.0 M-2.0 276.0L146.7 347.0 M-2.0 283.3L131.2 347.0 M-2.0 290.6L115.8 347.0 M-2.0 297.9L100.4 347.0 M-2.0 305.3L85.0 347.0 M-2.0 312.6L69.6 347.0 M-2.0 320.0L54.3 347.0 M-2.0 334.7L23.5 347.0 M-2.0 342.1L8.2 347.0" stroke="#2f2f56" stroke-opacity="0.30" stroke-width="0.8"/>
<path d="M21.2 -2.0L53.3 347.0 M87.7 -2.0L119.8 347.0 M154.1 -2.0L186.2 347.0 M220.6 -2.0L252.7 347.0 M287.0 -2.0L319.1 347.0 M353.5 -2.0L385.6 347.0 M419.9 -2.0L452.0 347.0 M486.4 -2.0L518.5 347.0 M552.8 -2.0L584.9 347.0 M619.3 -2.0L634.0 158.1 M529.1 -2.0L634.0 45.1 M372.8 -2.0L634.0 116.2 M217.8 -2.0L634.0 188.0 M64.0 -2.0L634.0 260.5 M-2.0 38.2L634.0 333.6 M-2.0 109.5L505.0 347.0 M-2.0 181.4L348.4 347.0 M-2.0 254.1L193.1 347.0 M-2.0 327.3L38.9 347.0" stroke="#2d2d53" stroke-opacity="0.52" stroke-width="1"/>
</g>
<!-- shaded faces -->
<polygon points="435.3,200.3 441.8,273.2 481.4,291.6" fill="#3a3a55" fill-opacity="0.5"/>
<polygon points="451.4,242.7 441.8,273.2 481.4,291.6" fill="#3a3a55" fill-opacity="0.22"/>
<!-- ellipse -->
<polygon points="362.3,237.0 363.6,203.0 374.4,176.2 393.9,158.8 420.6,152.2 452.2,156.9 486.1,172.6 519.7,197.9 550.2,230.8 575.2,268.7 592.5,308.4 600.9,346.8 599.6,380.8 588.8,407.6 569.3,425.0 542.6,431.6 511.0,426.9 477.1,411.2 443.5,385.9 413.0,353.0 388.0,315.1 370.7,275.4" stroke="#1b1b2a" stroke-width="0.9" stroke-linejoin="round"/>
<!-- long black wire -->
<polyline points="147,224.6 429.7,73.2 440.8,99.5" stroke="#000" stroke-width="1.3"/>
<!-- triangle -->
<polygon points="361.8,236.8 542,247.5 419.8,335.8" stroke="#050508" stroke-width="1.4" stroke-linejoin="round"/>
<!-- radius line -->
<line x1="481.4" y1="291.6" x2="522.6" y2="178" stroke="#0a0a12" stroke-width="1"/>
<!-- blue trackers -->
<g stroke="#3382f2" stroke-width="1.25" stroke-linecap="round">
<line x1="427.5" y1="125" x2="441.8" y2="273.2"/>
<line x1="441.8" y1="273.2" x2="419.8" y2="335.8"/>
<line x1="441.8" y1="273.2" x2="601.3" y2="347"/>
<line x1="435.3" y1="200.3" x2="481.4" y2="291.6"/>
<line x1="451.4" y1="242.7" x2="441.8" y2="273.2"/>
<path d="M297.5 263.0 C302.6 260.6 317.2 252.9 328.0 248.5 C338.8 244.1 349.2 239.8 362.0 236.8 C374.8 233.8 392.5 231.8 405.0 230.5 C417.5 229.2 429.3 229.2 437.0 228.8 C444.7 228.3 448.9 228.1 451.2 228.0"/>
<path d="M389.5 195.0 C387.1 197.8 379.6 205.0 375.0 212.0 C370.4 219.0 364.6 228.4 362.0 236.8 C359.4 245.1 358.4 252.7 359.2 262.0 C360.0 271.3 365.6 287.7 366.9 292.8"/>
</g>
<!-- cursor -->
<g transform="translate(523 176.8)"><path d="M-4.5 0H4.5M0 -4.5V4.5" stroke="#222" stroke-width="3"/><path d="M-3.7 0H3.7M0 -3.7V3.7" stroke="#fff" stroke-width="1.4"/></g>
<!-- axis cross -->
<g transform="translate(763.7 402)" stroke-width="1.5" stroke-linecap="round">
<line x1="0" y1="0" x2="6.9" y2="-4.6" stroke="#c41c1c"/><line x1="0" y1="0" x2="-7.3" y2="-3.5" stroke="#1e9a2a"/><line x1="-0.3" y1="0" x2="-1.1" y2="-11.1" stroke="#1c1cb4"/>
<text x="7.6" y="-4.3" font-size="7.5" fill="#222" stroke="none">x</text><text x="-6.6" y="-4.4" font-size="7.5" fill="#222" stroke="none">y</text><text x="0.4" y="-10.8" font-size="7.5" fill="#222" stroke="none">z</text>
</g>
</g>
</svg>

<div class="abs" style="left:788px;top:76px;width:5px;height:3px;background:repeating-linear-gradient(90deg,#c2bfba 0,#c2bfba 1px,transparent 1px,transparent 2px)"></div>
<div class="rb" style="top:81.8px"><svg width="15.6" height="14.4" viewBox="0 0 15.6 14.4" style="position:absolute;left:-1px;top:-1px"><g transform="translate(0.8 0.75) scale(0.9)"><path d="M5.4 6.4v-1.8a2.4 2.4 0 0 1 4.8 0v1.8" fill="none" stroke="#0a5f47" stroke-width="1.5"/><rect x="4.2" y="6.2" width="7.2" height="5.6" rx="0.6" fill="#12946f" stroke="#0a5f47" stroke-width="0.8"/><rect x="5" y="7" width="2" height="4" fill="#5fd0ad" opacity="0.8"/></g></svg></div>
<div class="rb" style="top:98.9px"><svg width="15.6" height="14.4" viewBox="0 0 15.6 14.4" style="position:absolute;left:-1px;top:-1px"><g transform="translate(0.8 0.75) scale(0.9)"><path d="M3.6 10.6l9.2-7" stroke="#0a5f47" stroke-width="1.8" stroke-linecap="round"/><ellipse cx="8.2" cy="7.1" rx="3.2" ry="2" transform="rotate(-37 8.2 7.1)" fill="#12946f" stroke="#0a5f47" stroke-width="0.8"/></g></svg></div>
<div class="rb" style="top:116.1px"><svg width="15.6" height="14.4" viewBox="0 0 15.6 14.4" style="position:absolute;left:-1px;top:-1px"><g transform="translate(0.8 0.75) scale(0.9)"><path d="M8.2 2.6v8" stroke="#0a5f47" stroke-width="2.6"/><path d="M3.4 10.6h9.6" stroke="#0a5f47" stroke-width="2.6" stroke-linecap="round"/><path d="M8.2 3v7.4M4 10.6h8.4" stroke="#12946f" stroke-width="1.2"/></g></svg></div>
<div class="rb" style="top:133.2px"><svg width="15.6" height="14.4" viewBox="0 0 15.6 14.4" style="position:absolute;left:-1px;top:-1px"><g transform="translate(0.8 0.75) scale(0.9)"><path d="M5.6 2.8v9M10.8 2.8v9M3.4 5h9.6M3.4 9.8h9.6" stroke="#0a5f47" stroke-width="2.6" stroke-linecap="round"/><path d="M5.6 2.8v9M10.8 2.8v9M3.4 5h9.6M3.4 9.8h9.6" stroke="#12946f" stroke-width="1.3" stroke-linecap="round"/></g></svg></div>
<div class="rb" style="top:150.4px"><svg width="15.6" height="14.4" viewBox="0 0 15.6 14.4" style="position:absolute;left:-1px;top:-1px"><g transform="translate(0.8 0.75) scale(0.9)"><path d="M4.2 3.4l8 8M12.2 3.4l-8 8" stroke="#0a5f47" stroke-width="2.8" stroke-linecap="round"/><path d="M4.2 3.4l8 8M12.2 3.4l-8 8" stroke="#12946f" stroke-width="1.4" stroke-linecap="round"/></g></svg></div>
<div class="rb" style="top:167.6px"><svg width="15.6" height="14.4" viewBox="0 0 15.6 14.4" style="position:absolute;left:-1px;top:-1px"><g transform="translate(0.8 0.75) scale(0.9)"><path d="M3.8 4l9 4M3.4 8.4l7.4 3.6" stroke="#0a5f47" stroke-width="2.4" stroke-linecap="round"/><path d="M3.8 4l9 4M3.4 8.4l7.4 3.6" stroke="#12946f" stroke-width="1.1" stroke-linecap="round"/></g></svg></div>
<div class="rb" style="top:184.7px;background:linear-gradient(#dddbd7,#e6e4e1)"><svg width="15.6" height="14.4" viewBox="0 0 15.6 14.4" style="position:absolute;left:-1px;top:-1px"><g transform="translate(0.8 0.75) scale(0.9)"><path d="M5.4 9.6l6.6-5.4" stroke="#0a5f47" stroke-width="2.4" stroke-linecap="round"/><path d="M5.4 9.6l6.6-5.4" stroke="#12946f" stroke-width="1.1" stroke-linecap="round"/><circle cx="5" cy="10" r="2.2" fill="#12946f" stroke="#0a5f47" stroke-width="0.8"/></g></svg></div>
<div class="rb" style="top:201.8px"><svg width="15.6" height="14.4" viewBox="0 0 15.6 14.4" style="position:absolute;left:-1px;top:-1px"><g transform="translate(0.8 0.75) scale(0.9)"><path d="M8 2.6l4.4 4.2-4.4 4.2-4.4-4.2z" fill="#fff" stroke="#0a5f47" stroke-width="2.2" stroke-linejoin="round"/><circle cx="8" cy="2.4" r="1.7" fill="#12946f" stroke="#0a5f47" stroke-width="0.7"/><circle cx="12.6" cy="6.8" r="1.7" fill="#12946f" stroke="#0a5f47" stroke-width="0.7"/><circle cx="8" cy="11.2" r="1.7" fill="#12946f" stroke="#0a5f47" stroke-width="0.7"/><circle cx="3.4" cy="6.8" r="1.7" fill="#12946f" stroke="#0a5f47" stroke-width="0.7"/></g></svg></div>
<div class="rb" style="top:219.0px"><svg width="15.6" height="14.4" viewBox="0 0 15.6 14.4" style="position:absolute;left:-1px;top:-1px"><g transform="translate(0.8 0.75) scale(0.9)"><circle cx="8" cy="7" r="4.4" fill="#12946f" stroke="#0a5f47" stroke-width="1.2"/><circle cx="8" cy="7" r="2" fill="#cfeee3" stroke="#0a5f47" stroke-width="0.8"/><circle cx="8" cy="7" r="0.7" fill="#0a5f47"/></g></svg></div>
<div class="rb" style="top:236.1px"><svg width="15.6" height="14.4" viewBox="0 0 15.6 14.4" style="position:absolute;left:-1px;top:-1px"><g transform="translate(0.8 0.75) scale(0.9)"><path d="M3 6.8h10.4" stroke="#0a5f47" stroke-width="0.8"/><circle cx="4.2" cy="6.8" r="1.6" fill="#12946f" stroke="#0a5f47" stroke-width="0.7"/><circle cx="8.2" cy="6.8" r="1.6" fill="#12946f" stroke="#0a5f47" stroke-width="0.7"/><circle cx="12.2" cy="6.8" r="1.6" fill="#12946f" stroke="#0a5f47" stroke-width="0.7"/></g></svg></div>
<div class="rb" style="top:253.3px"><svg width="15.6" height="14.4" viewBox="0 0 15.6 14.4" style="position:absolute;left:-1px;top:-1px"><g transform="translate(0.8 0.75) scale(0.9)"><path d="M3.6 6.2l6.8 4.4" stroke="#0a5f47" stroke-width="2.6" stroke-linecap="round"/><path d="M3.6 6.2l6.8 4.4" stroke="#12946f" stroke-width="1.2" stroke-linecap="round"/><circle cx="10.4" cy="3.6" r="1.6" fill="#12946f" stroke="#0a5f47" stroke-width="0.7"/></g></svg></div>
<div class="rb" style="top:270.4px"><svg width="15.6" height="14.4" viewBox="0 0 15.6 14.4" style="position:absolute;left:-1px;top:-1px"><g transform="translate(0.8 0.75) scale(0.9)"><path d="M8 2.6v8.4M3.8 6.8h8.4" stroke="#0a5f47" stroke-width="2.6" stroke-linecap="round"/><path d="M8 2.6v8.4M3.8 6.8h8.4" stroke="#12946f" stroke-width="1.2" stroke-linecap="round"/></g></svg></div>
<div class="rb" style="top:287.6px"><svg width="15.6" height="14.4" viewBox="0 0 15.6 14.4" style="position:absolute;left:-1px;top:-1px"><g transform="translate(0.8 0.75) scale(0.9)"><path d="M5 10.6v-3.4h2.6v-3h4M5 10.6h2.6M11.6 4.2v2.6" fill="none" stroke="#4f9c88" stroke-width="1.6"/><path d="M8.6 3l1.6-0.8M4.2 8l-1 1.4" stroke="#86b8aa" stroke-width="0.8"/></g></svg></div>
<div class="rb" style="top:304.8px"><svg width="15.6" height="14.4" viewBox="0 0 15.6 14.4" style="position:absolute;left:-1px;top:-1px"><g transform="translate(0.8 0.75) scale(0.9)"><rect x="3.6" y="3" width="8.8" height="8" rx="0.6" fill="#14a47c" stroke="#0a5f47" stroke-width="0.9"/><circle cx="6" cy="8.6" r="1.1" fill="#3fc79f" stroke="#0a5f47" stroke-width="0.6"/></g></svg></div>
<div class="abs" style="left:149px;top:419px;width:632px;height:1px;background:#c6c4c1"></div>
<div id="doctab" class="abs"><svg width="11" height="10" viewBox="0 0 11 10" style="position:absolute;left:3.4px;top:6.2px"><path d="M0.6 0.4h4.8v1.8h-2.8v1.6h2v1.7h-2v3.6h-2z" fill="#e0301e"/><circle cx="6.8" cy="6" r="2.9" fill="#1c3fae"/><circle cx="6.8" cy="6" r="3.3" fill="none" stroke="#1c3fae" stroke-width="1.1" stroke-dasharray="1.3 1.3"/><circle cx="6.8" cy="6" r="1.1" fill="#f4f6ff"/></svg><div class="lbl" style="left:19.6px;top:7.1px;font-size:10.2px;color:#4a4a4a;transform:scaleX(0.94);transform-origin:0 0">Unnamed : 1*</div><svg width="10" height="10" viewBox="0 0 10 10" style="position:absolute;left:85.2px;top:6.2px"><path d="M1.6 1.6l6.8 6.8M8.4 1.6l-6.8 6.8" stroke="#4a4a4a" stroke-width="2.3"/></svg></div>
<div id="status" class="abs"><svg width="10" height="10" viewBox="0 0 10 10" style="position:absolute;right:0;bottom:0"><path d="M9.5 1.5L1.5 9.5M9.5 4.5L4.5 9.5M9.5 7.5L7.5 9.5" stroke="#dcdad7" stroke-width="1" stroke-dasharray="1 1"/></svg><div class="lbl" style="right:18px;top:4px;font-size:9.8px;transform:scaleX(0.97);transform-origin:100% 0">68.37 x 37.38 mm</div></div>

</body></html>
